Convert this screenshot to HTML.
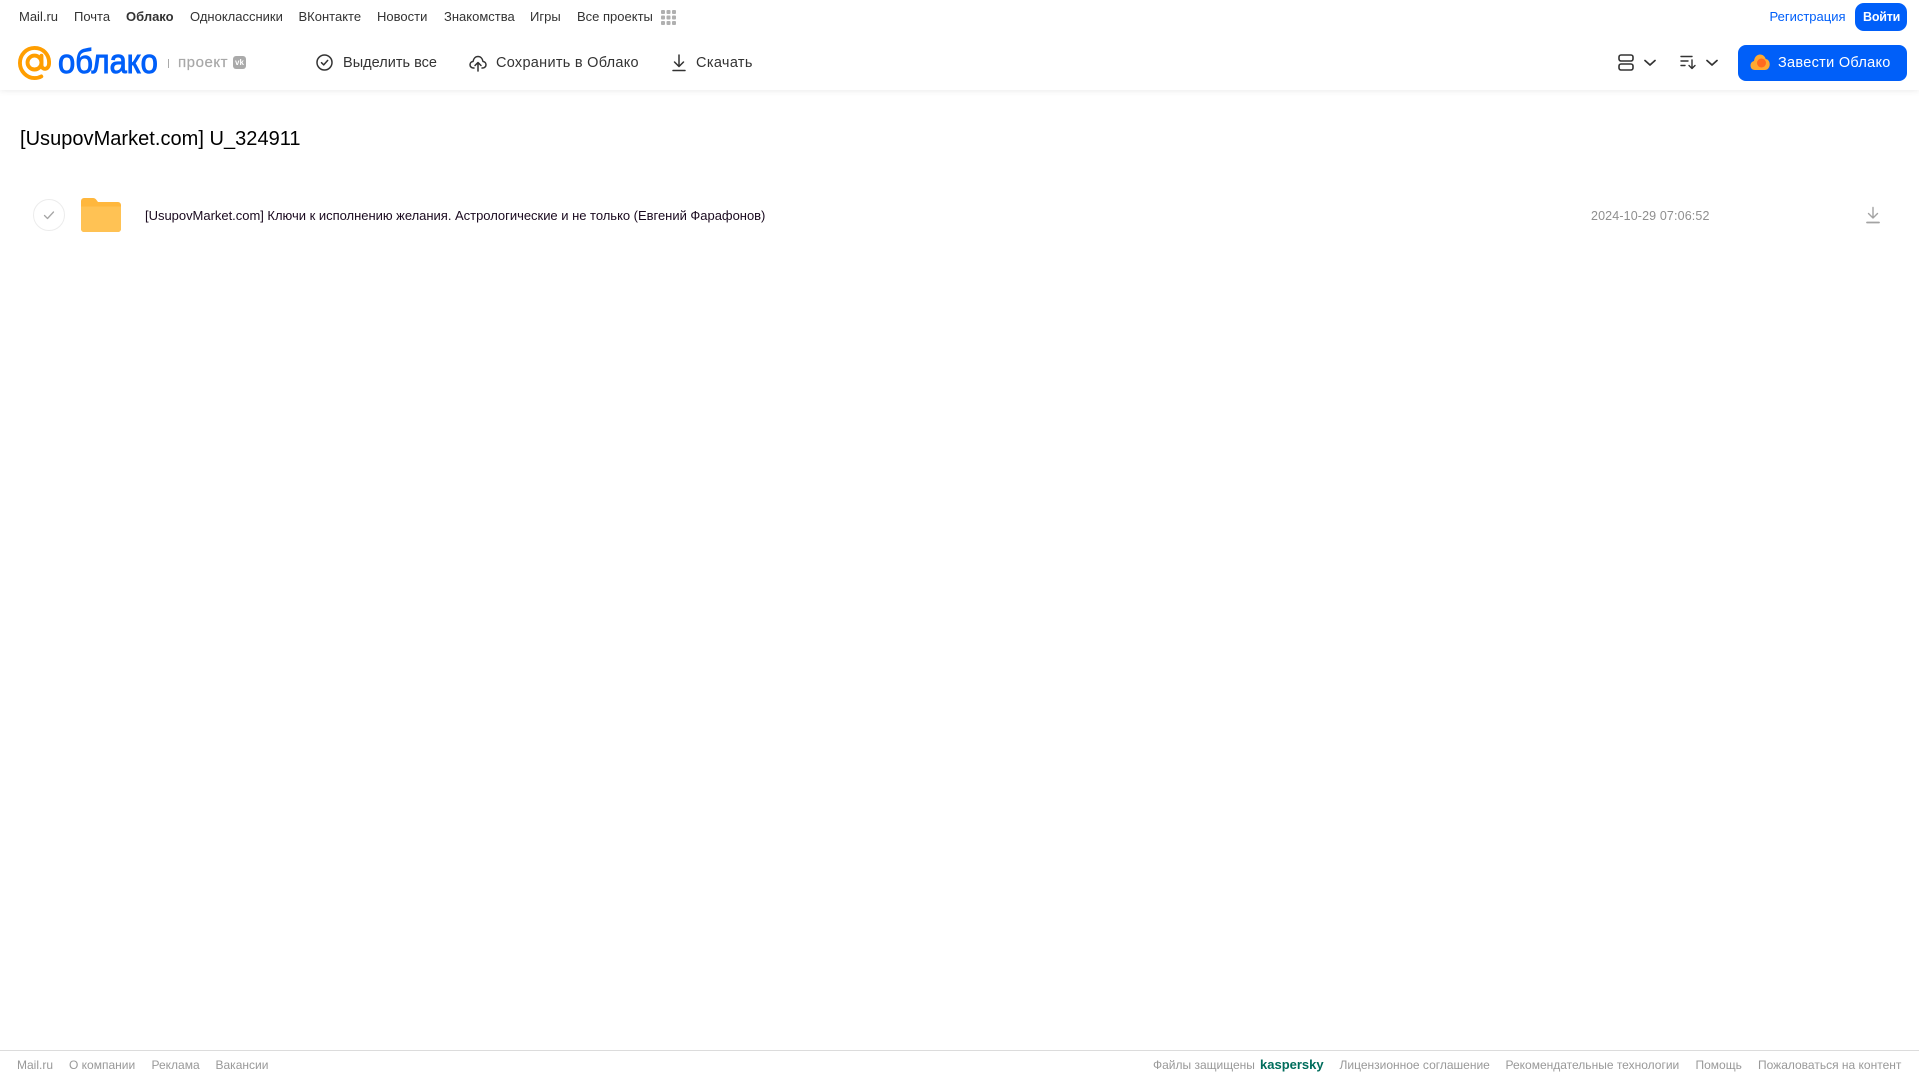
<!DOCTYPE html>
<html lang="ru"><head><meta charset="utf-8"><title>Облако</title>
<style>
html,body{margin:0;padding:0;background:#fff;width:1919px;height:1079px;overflow:hidden;font-family:"Liberation Sans",sans-serif}
.t{position:absolute;white-space:nowrap;line-height:20px;height:20px}
.n{top:7px;font-size:13px;color:#333}
.a{top:53px;font-size:14.5px;color:#333;letter-spacing:.35px}
.f{top:1055px;font-size:12px;color:#999}
svg{position:absolute;display:block}
#hdr{position:absolute;left:0;top:0;width:1919px;height:90px;background:#fff;box-shadow:0 1px 6px rgba(0,0,0,.08)}
</style></head><body>
<div id="hdr"></div>
<span class="t n" style="left:19px">Mail.ru</span>
<span class="t n" style="left:74px">Почта</span>
<span class="t n" style="left:126px;font-weight:bold">Облако</span>
<span class="t n" style="left:190px">Одноклассники</span>
<span class="t n" style="left:298.500px">ВКонтакте</span>
<span class="t n" style="left:377px">Новости</span>
<span class="t n" style="left:444px">Знакомства</span>
<span class="t n" style="left:530px">Игры</span>
<span class="t n" style="left:577px">Все проекты</span>
<svg style="left:661px;top:10px" width="15" height="15" viewBox="0 0 15 15" fill="#b0b0b0"><rect x="0" y="0" width="4" height="4" rx="1"/><rect x="5.500" y="0" width="4" height="4" rx="1"/><rect x="11" y="0" width="4" height="4" rx="1"/><rect x="0" y="5.500" width="4" height="4" rx="1"/><rect x="5.500" y="5.500" width="4" height="4" rx="1"/><rect x="11" y="5.500" width="4" height="4" rx="1"/><rect x="0" y="11" width="4" height="4" rx="1"/><rect x="5.500" y="11" width="4" height="4" rx="1"/><rect x="11" y="11" width="4" height="4" rx="1"/></svg>
<span class="t" style="left:1769.500px;top:7px;font-size:13px;color:#005ff9">Регистрация</span>
<div style="position:absolute;left:1855px;top:3px;width:52px;height:28px;border-radius:9px;background:#005ff9"></div>
<span class="t" style="left:1863px;top:7px;font-size:12.500px;font-weight:bold;letter-spacing:-.2px;color:#fff">Войти</span>

<svg style="left:18px;top:46px" width="33" height="34" viewBox="0 0 34 35" fill="none" stroke="#ff9e00" stroke-width="4"><circle cx="17" cy="17" r="7.200"/><path d="M24.200 10v9.500c0 5.500 7.600 5.500 7.800-1.500C32.500 8.500 25.500 2 17 2 8.500 2 2 9 2 17.500S9 33 17 33c2.500 0 4.800-.5 7-1.700" stroke-linecap="round"/></svg>
<span class="t" style="left:58px;top:41px;height:42px;line-height:42px;font-size:34px;color:#005ff9;-webkit-text-stroke:1px #005ff9;transform:scaleX(.91);transform-origin:0 50%">облако</span>
<div style="position:absolute;left:168px;top:59px;width:1px;height:9px;background:#aaa"></div>
<span class="t" style="left:178px;top:53px;font-size:15px;color:#a8a8a8;letter-spacing:.55px;-webkit-text-stroke:.2px #a8a8a8">проект</span>
<div style="position:absolute;left:233px;top:56px;width:13px;height:13px;border-radius:3px;background:#aaa;color:#fff;font-size:8px;font-weight:bold;line-height:13px;text-align:center">vk</div>

<svg style="left:316px;top:54px" width="17" height="17" viewBox="0 0 17 17" fill="none" stroke="#333" stroke-width="1.500"><circle cx="8.500" cy="8.500" r="7.500"/><path d="M5.500 8.700l2.200 2.200 4-4.500" stroke-linecap="round" stroke-linejoin="round"/></svg>
<span class="t a" style="left:343px;letter-spacing:.02px">Выделить все</span>
<svg style="left:469px;top:54px" width="18" height="18" viewBox="0 0 18 18" fill="none" stroke="#333" stroke-width="1.500" stroke-linecap="round" stroke-linejoin="round"><path d="M5 14H4.500C2.500 14 1 12.500 1 10.700c0-1.700 1.300-3 3-3.200C4.500 4.500 6.500 2.500 9 2.500s4.500 2 5 5c1.700.2 3 1.500 3 3.200 0 1.800-1.500 3.300-3.500 3.300H13"/><path d="M9 17V9M6 11.500L9 8.500l3 3"/></svg>
<span class="t a" style="left:496px;letter-spacing:.28px">Сохранить в Облако</span>
<svg style="left:671px;top:54px" width="16" height="18" viewBox="0 0 16 18" fill="none" stroke="#333" stroke-width="1.500" stroke-linecap="round" stroke-linejoin="round"><path d="M8 1v11M3.500 8L8 12.500 12.500 8M2 16.500h12"/></svg>
<span class="t a" style="left:696px">Скачать</span>

<svg style="left:1618px;top:54px" width="16" height="17" viewBox="0 0 16 17" fill="none" stroke="#333" stroke-width="1.600"><rect x="1" y="1" width="14" height="6" rx="2"/><rect x="1" y="10" width="14" height="6" rx="2"/></svg>
<svg style="left:1644px;top:59px" width="12" height="8" viewBox="0 0 12 8" fill="none" stroke="#333" stroke-width="1.700" stroke-linecap="round" stroke-linejoin="round"><path d="M1 1.500l5 4.500 5-4.500"/></svg>
<svg style="left:1680px;top:55px" width="16" height="15" viewBox="0 0 16 15" fill="none" stroke="#333" stroke-width="1.400" stroke-linecap="round" stroke-linejoin="round"><path d="M1 1.500h11M1 6h7M1 10.500h4M12 5v8.500M9 10.500l3 3 3-3"/></svg>
<svg style="left:1706px;top:59px" width="12" height="8" viewBox="0 0 12 8" fill="none" stroke="#333" stroke-width="1.700" stroke-linecap="round" stroke-linejoin="round"><path d="M1 1.500l5 4.500 5-4.500"/></svg>

<div style="position:absolute;left:1738px;top:45px;width:169px;height:36px;border-radius:8px;background:#005ff9"></div>
<svg style="left:1750px;top:54px" width="20" height="17" viewBox="0 0 20 17"><path d="M5 16C2 16 .500 14 .500 11.500.500 9 2 7.500 4 7 4.500 3 7 .500 10 .500c3 0 5 2 5.700 4.500 2.500.3 4 2.500 4 5.200 0 3.300-2 5.800-5 5.800z" fill="#ffa930"/><circle cx="11.500" cy="9" r="4.500" fill="#ff6a1f"/></svg>
<span class="t" style="left:1778px;top:53px;font-size:14.500px;color:#fff;letter-spacing:.3px">Завести Облако</span>

<span class="t" style="left:20px;top:128px;height:22px;line-height:22px;font-size:20px;letter-spacing:.03px;color:#000">[UsupovMarket.com] U_324911</span>

<svg style="left:33px;top:199px" width="32" height="32" viewBox="0 0 32 32" fill="none"><circle cx="16" cy="16" r="15.500" stroke="#ececec"/><path d="M11.500 16.500l3 3 6-6.500" stroke="#a6a6a6" stroke-width="1.300" stroke-linecap="round" stroke-linejoin="round"/></svg>
<svg style="left:81px;top:198px" width="40" height="34" viewBox="0 0 40 34"><path d="M0 3a3 3 0 0 1 3-3h9c1.500 0 2.500.7 3.300 1.700L17 4h20a3 3 0 0 1 3 3v24a3 3 0 0 1-3 3H3a3 3 0 0 1-3-3z" fill="#ffb73d"/><path d="M0 8.500h40V31a3 3 0 0 1-3 3H3a3 3 0 0 1-3-3z" fill="#ffc254"/></svg>
<span class="t" style="left:145px;top:206px;font-size:13px;letter-spacing:-.02px;color:#1a0a1f">[UsupovMarket.com] Ключи к исполнению желания. Астрологические и не только (Евгений Фарафонов)</span>
<span class="t" style="left:1591px;top:206px;font-size:12.500px;letter-spacing:.13px;color:#8f8f8f">2024-10-29 07:06:52</span>
<svg style="left:1866px;top:206px" width="14" height="18" viewBox="0 0 14 18" fill="none" stroke="#a3a3a3" stroke-width="1.400" stroke-linecap="round" stroke-linejoin="round"><path d="M7 1.500v10M2.500 7.500L7 12l4.500-4.500"/><path d="M1 16.500h12" stroke-width="1.800"/></svg>

<div style="position:absolute;left:0;top:1050px;width:1919px;height:1px;background:#dcdcdc"></div>
<span class="t f" style="left:17px">Mail.ru</span>
<span class="t f" style="left:69px">О компании</span>
<span class="t f" style="left:151.500px">Реклама</span>
<span class="t f" style="left:215.500px">Вакансии</span>
<span class="t f" style="left:1153px">Файлы защищены</span>
<span class="t f" style="left:1260px;font-size:13px;font-weight:bold;color:#006d5c">kaspersky</span>
<span class="t f" style="left:1339.500px">Лицензионное соглашение</span>
<span class="t f" style="left:1505.500px">Рекомендательные технологии</span>
<span class="t f" style="left:1695.500px">Помощь</span>
<span class="t f" style="left:1758px">Пожаловаться на контент</span>
</body></html>
